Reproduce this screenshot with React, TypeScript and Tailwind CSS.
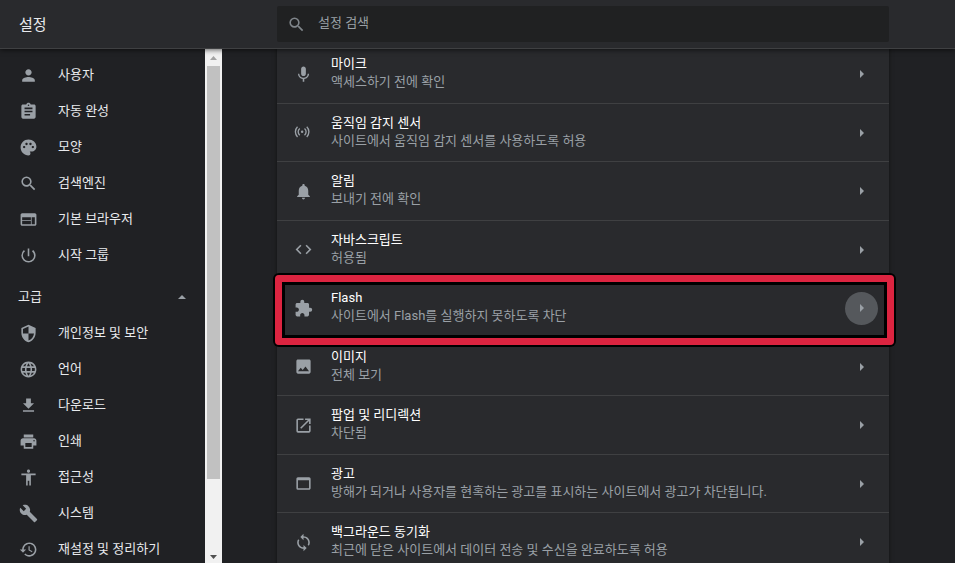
import { useState } from 'react';
import type { ComponentType } from 'react';
import clsx from 'clsx';
import {
  MdPerson,
  MdAssignment,
  MdPalette,
  MdSearch,
  MdWeb,
  MdPowerSettingsNew,
  MdSecurity,
  MdLanguage,
  MdPrint,
  MdAccessibility,
  MdBuild,
  MdMic,
  MdNotifications,
  MdCode,
  MdExtension,
  MdWebAsset,
  MdSync,
  MdOpenInNew,
} from 'react-icons/md';

type Icon = ComponentType<{ className?: string }>;

interface MenuItem {
  label: string;
  icon: Icon;
}

interface Permission {
  title: string;
  description: string;
  icon: Icon;
  highlighted?: boolean;
}

const DownloadIcon: Icon = ({ className }) => (
  <svg viewBox="0 0 24 24" fill="currentColor" className={className}>
    <path d="M19 9h-4V3H9v6H5l7 7 7-7zM5 18v2h14v-2H5z" />
  </svg>
);

const RestoreIcon: Icon = ({ className }) => (
  <svg viewBox="0 0 24 24" fill="currentColor" className={className}>
    <path d="M13 3c-4.970 0-9 4.030-9 9H1l3.890 3.890.070.140L9 12H6c0-3.870 3.130-7 7-7s7 3.130 7 7-3.130 7-7 7c-1.930 0-3.680-.790-4.940-2.060l-1.420 1.420C8.270 19.990 10.510 21 13 21c4.970 0 9-4.030 9-9s-4.030-9-9-9zm-1 5v5l4.280 2.540.720-1.210-3.500-2.080V8H12z" />
  </svg>
);

const ImageIcon: Icon = ({ className }) => (
  <svg viewBox="0 0 24 24" fill="currentColor" className={className}>
    <path d="M21 19V5c0-1.1-.9-2-2-2H5c-1.1 0-2 .9-2 2v14c0 1.1.9 2 2 2h14c1.1 0 2-.9 2-2zM8.5 13.5l2.5 3.01L14.5 12l4.500 6H5l3.500-4.500z" />
  </svg>
);

const SensorIcon: Icon = ({ className }) => (
  <svg viewBox="0 -1 28 28" fill="none" stroke="currentColor" strokeWidth="2" className={className}>
    <path d="M5.200 4.500a10.500 10.500 0 0 0 0 15M18.800 4.500a10.500 10.500 0 0 1 0 15M8.500 7a6.500 6.500 0 0 0 0 10M15.500 7a6.500 6.500 0 0 1 0 10" />
    <circle cx="12" cy="12" r="1.800" fill="currentColor" stroke="none" />
  </svg>
);

const basicMenu: MenuItem[] = [
  { label: '사용자', icon: MdPerson },
  { label: '자동 완성', icon: MdAssignment },
  { label: '모양', icon: MdPalette },
  { label: '검색엔진', icon: MdSearch },
  { label: '기본 브라우저', icon: MdWeb },
  { label: '시작 그룹', icon: MdPowerSettingsNew },
];

const advancedMenu: MenuItem[] = [
  { label: '개인정보 및 보안', icon: MdSecurity },
  { label: '언어', icon: MdLanguage },
  { label: '다운로드', icon: DownloadIcon },
  { label: '인쇄', icon: MdPrint },
  { label: '접근성', icon: MdAccessibility },
  { label: '시스템', icon: MdBuild },
  { label: '재설정 및 정리하기', icon: RestoreIcon },
];

const permissions: Permission[] = [
  { title: '마이크', description: '액세스하기 전에 확인', icon: MdMic },
  { title: '움직임 감지 센서', description: '사이트에서 움직임 감지 센서를 사용하도록 허용', icon: SensorIcon },
  { title: '알림', description: '보내기 전에 확인', icon: MdNotifications },
  { title: '자바스크립트', description: '허용됨', icon: MdCode },
  { title: 'Flash', description: '사이트에서 Flash를 실행하지 못하도록 차단', icon: MdExtension, highlighted: true },
  { title: '이미지', description: '전체 보기', icon: ImageIcon },
  { title: '팝업 및 리디렉션', description: '차단됨', icon: MdOpenInNew },
  { title: '광고', description: '방해가 되거나 사용자를 현혹하는 광고를 표시하는 사이트에서 광고가 차단됩니다.', icon: MdWebAsset },
  { title: '백그라운드 동기화', description: '최근에 닫은 사이트에서 데이터 전송 및 수신을 완료하도록 허용', icon: MdSync },
];

function MenuList({ items }: { items: MenuItem[] }) {
  return (
    <ul>
      {items.map(({ label, icon: ItemIcon }) => (
        <li key={label}>
          <a href="#" className="flex h-9 items-center gap-5 pl-[19px] text-[13px] text-[#e8eaed]">
            <ItemIcon className="size-[19px] shrink-0 text-[#9aa0a6]" />
            {label}
          </a>
        </li>
      ))}
    </ul>
  );
}

function Scrollbar() {
  return (
    <div aria-hidden="true" className="flex w-[17px] shrink-0 flex-col items-center bg-[#f1f1f1]">
      <svg viewBox="0 0 17 17" className="size-[17px] shrink-0 fill-[#a3a3a3]">
        <path d="M5 11h7L8.500 7z" />
      </svg>
      <div className="min-h-0 w-[13px] flex-1">
        <div className="h-[86%] bg-[#c1c1c1]" />
      </div>
      <svg viewBox="0 0 17 17" className="size-[17px] shrink-0 fill-[#505050]">
        <path d="M5 9h7l-3.500 4z" />
      </svg>
    </div>
  );
}

function Sidebar() {
  const [open, setOpen] = useState(true);

  return (
    <div className="flex w-[222px] shrink-0">
      <nav className="min-w-0 flex-1 overflow-hidden pt-2">
        <MenuList items={basicMenu} />
        <button
          type="button"
          aria-expanded={open}
          onClick={() => setOpen(!open)}
          className="mt-1.5 flex h-9 w-full items-center justify-between pr-[19px] pb-px pl-[18px] text-[13px] text-[#e8eaed]"
        >
          고급
          <svg viewBox="0 0 8 4" className={clsx('h-1 w-2 fill-[#9aa0a6]', !open && 'rotate-180')}>
            <path d="M0 4h8L4 0z" />
          </svg>
        </button>
        {open && <MenuList items={advancedMenu} />}
      </nav>
      <Scrollbar />
    </div>
  );
}

function PermissionRow({ title, description, icon: RowIcon, highlighted }: Permission) {
  return (
    <li className="relative flex items-center border-b border-[#3f4042] pr-[11px] pl-[17px] odd:h-[59px] even:h-[58px]">
      <RowIcon className="size-[19px] shrink-0 text-[#9aa0a6]" />
      <div className="min-w-0 flex-1 pb-0.5 pl-[18px] text-[13px] leading-[18px]">
        <p className="truncate text-white">{title}</p>
        <p className="truncate text-[#9aa0a6]">{description}</p>
      </div>
      <button
        type="button"
        aria-label={title}
        className={clsx(
          'flex size-[33px] shrink-0 items-center justify-center rounded-full',
          highlighted && 'bg-[#55585c]'
        )}
      >
        <svg viewBox="0 0 4 8" className="h-2 w-1 fill-[#9aa0a6]">
          <path d="M0 0v8l4-4z" />
        </svg>
      </button>

      {/* Marco de resaltado */}
      {highlighted && (
        <div className="pointer-events-none absolute -top-1 -right-[5px] -bottom-2 -left-0.5 z-10 rounded-sm border-[7px] border-[#dc2440] shadow-[0_0_0_2px_#000,inset_0_0_0_3px_#000]" />
      )}
    </li>
  );
}

export default function App() {
  const [query, setQuery] = useState('');

  return (
    <div className="flex h-screen flex-col overflow-hidden bg-[#202124] font-['Roboto','Noto_Sans_CJK_KR',sans-serif]">
      {/* Header */}
      <header className="relative z-20 flex h-[49px] shrink-0 items-center border-b border-[#3f4042] bg-[#292a2d] shadow-[0_1px_5px_rgba(0,0,0,0.6)]">
        <h1 className="w-[222px] shrink-0 pt-0.5 pl-[19px] text-[15px] text-[#e8eaed]">설정</h1>
        <div className="min-w-0 flex-1 pr-[66px] pl-[55px]">
          <label className="flex h-9 items-center gap-3 rounded-xs bg-[#202122] pl-[10px]">
            <MdSearch className="size-[19px] shrink-0 text-[#80868b]" />
            <input
              type="text"
              aria-label="설정 검색"
              placeholder="설정 검색"
              value={query}
              onChange={(e) => setQuery(e.target.value)}
              className="h-full min-w-0 flex-1 bg-transparent pb-1 text-[13px] text-[#e8eaed] outline-none placeholder:text-[#9aa0a6]"
            />
          </label>
        </div>
      </header>

      <div className="flex min-h-0 flex-1">
        <Sidebar />
        <main className="min-w-0 flex-1 overflow-hidden pr-[66px] pl-[55px]">
          <ul className="-mt-1 bg-[#292a2d] shadow-[0_0_4px_rgba(0,0,0,0.5)]">
            {permissions.map((permission) => (
              <PermissionRow key={permission.title} {...permission} />
            ))}
          </ul>
        </main>
      </div>
    </div>
  );
}
